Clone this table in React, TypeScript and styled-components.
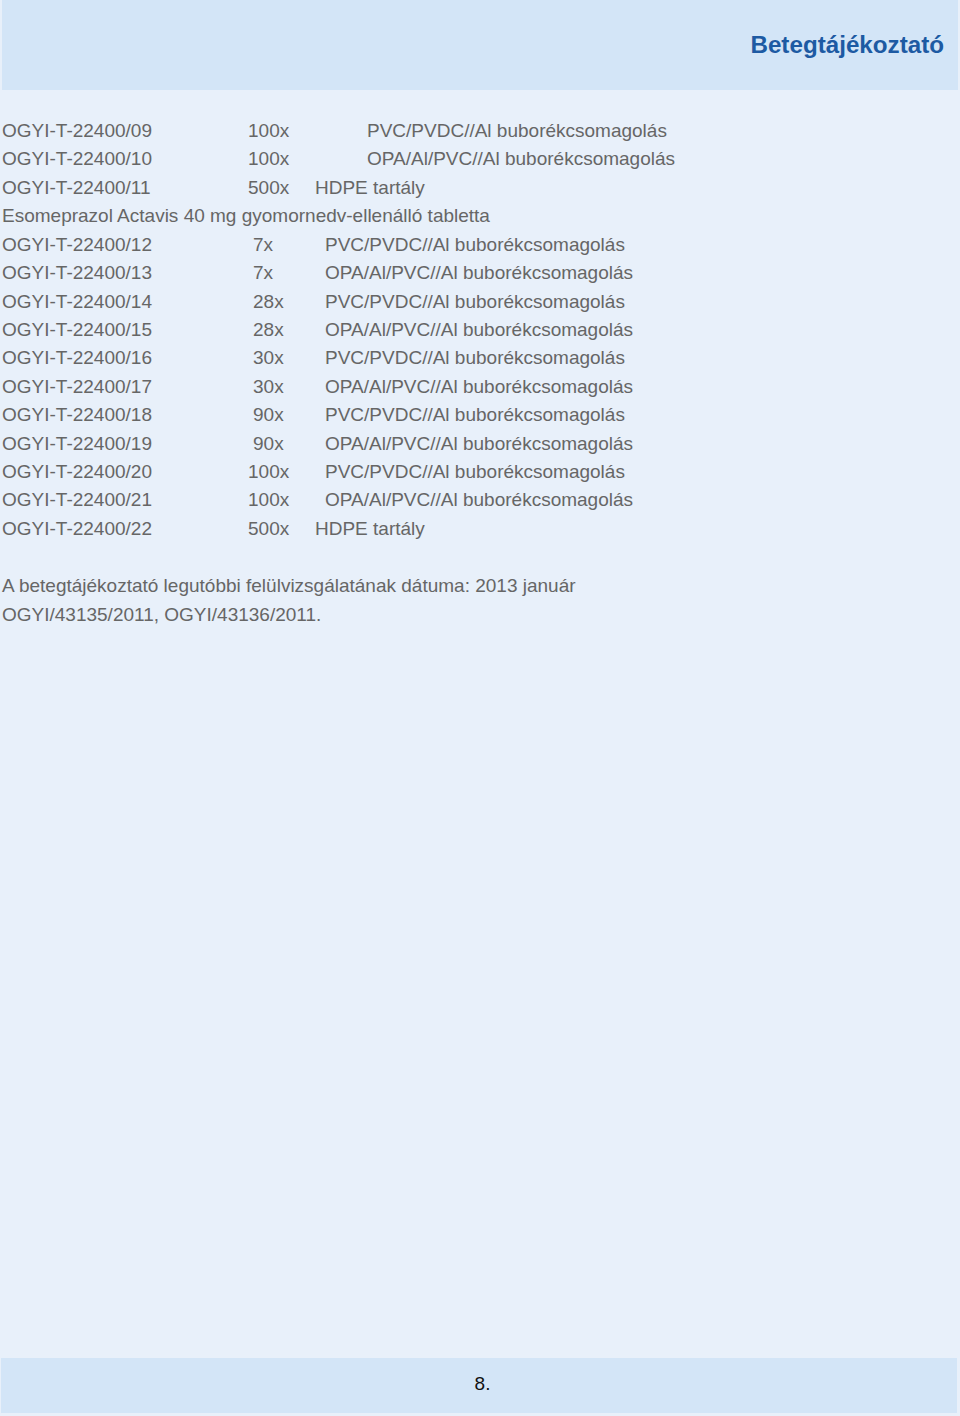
import React from "react";
import styled, { createGlobalStyle } from "styled-components";

const Global = createGlobalStyle`
  html, body { margin: 0; padding: 0; background: #e8f0fa; }
  body { font-family: "Liberation Sans", Arial, sans-serif; }
`;

const Page = styled.div`
  width: 960px;
  height: 1416px;
  display: flex;
  flex-direction: column;
  background: #e8f0fa;
  box-sizing: border-box;
`;

const Header = styled.header`
  height: 90px;
  margin: 0 2px;
  background: #d3e5f7;
  display: flex;
  justify-content: flex-end;
  align-items: flex-start;
  padding: 29px 14px 0 0;
  box-sizing: border-box;
`;

const Title = styled.h1`
  margin: 0;
  font-size: 24.2px;
  line-height: 32px;
  font-weight: 700;
  color: #1d5aa3;
`;

const Main = styled.main`
  flex: 1;
  padding: 27px 0 0 2px;
  color: #666666;
  font-size: 19px;
`;

const Table = styled.div`
  display: flex;
  flex-direction: column;
`;

const Row = styled.div`
  display: flex;
  height: 28.43px;
  line-height: 28.43px;
  white-space: nowrap;
`;

const Code = styled.span`
  width: 246px;
  flex: none;
`;

const Qty = styled.span<{ $pl: number; $w: number }>`
  flex: none;
  width: ${(p) => p.$w}px;
  padding-left: ${(p) => p.$pl}px;
  box-sizing: border-box;
`;

const Pack = styled.span``;

const Notes = styled.div`
  margin-top: 29px;
  line-height: 28.4px;
`;

const Footer = styled.footer`
  height: 55px;
  margin: 0 3px 3px 1px;
  background: #d3e5f7;
  display: flex;
  align-items: center;
  justify-content: center;
  font-size: 19px;
  color: #111;
  padding: 0 0 4px 7px;
  box-sizing: border-box;
`;

type R = { code?: string; qty?: string; pack?: string; full?: string; pl?: number; w?: number };

const PVC = "PVC/PVDC//Al buborékcsomagolás";
const OPA = "OPA/Al/PVC//Al buborékcsomagolás";
const HDPE = "HDPE tartály";

const rows: R[] = [
  { code: "OGYI-T-22400/09", qty: "100x", pack: PVC, pl: 0, w: 119 },
  { code: "OGYI-T-22400/10", qty: "100x", pack: OPA, pl: 0, w: 119 },
  { code: "OGYI-T-22400/11", qty: "500x", pack: HDPE, pl: 0, w: 67 },
  { full: "Esomeprazol Actavis 40 mg gyomornedv-ellenálló tabletta" },
  { code: "OGYI-T-22400/12", qty: "7x", pack: PVC, pl: 5, w: 77 },
  { code: "OGYI-T-22400/13", qty: "7x", pack: OPA, pl: 5, w: 77 },
  { code: "OGYI-T-22400/14", qty: "28x", pack: PVC, pl: 5, w: 77 },
  { code: "OGYI-T-22400/15", qty: "28x", pack: OPA, pl: 5, w: 77 },
  { code: "OGYI-T-22400/16", qty: "30x", pack: PVC, pl: 5, w: 77 },
  { code: "OGYI-T-22400/17", qty: "30x", pack: OPA, pl: 5, w: 77 },
  { code: "OGYI-T-22400/18", qty: "90x", pack: PVC, pl: 5, w: 77 },
  { code: "OGYI-T-22400/19", qty: "90x", pack: OPA, pl: 5, w: 77 },
  { code: "OGYI-T-22400/20", qty: "100x", pack: PVC, pl: 0, w: 77 },
  { code: "OGYI-T-22400/21", qty: "100x", pack: OPA, pl: 0, w: 77 },
  { code: "OGYI-T-22400/22", qty: "500x", pack: HDPE, pl: 0, w: 67 },
];

export default function App() {
  return (
    <>
      <Global />
      <Page>
        <Header>
          <Title>Betegtájékoztató</Title>
        </Header>
        <Main>
          <Table>
            {rows.map((r, i) =>
              r.full ? (
                <Row key={i}>{r.full}</Row>
              ) : (
                <Row key={i}>
                  <Code>{r.code}</Code>
                  <Qty $pl={r.pl!} $w={r.w!}>{r.qty}</Qty>
                  <Pack>{r.pack}</Pack>
                </Row>
              )
            )}
          </Table>
          <Notes>
            A betegtájékoztató legutóbbi felülvizsgálatának dátuma: 2013 január
            <br />
            OGYI/43135/2011, OGYI/43136/2011.
          </Notes>
        </Main>
        <Footer>8.</Footer>
      </Page>
    </>
  );
}
